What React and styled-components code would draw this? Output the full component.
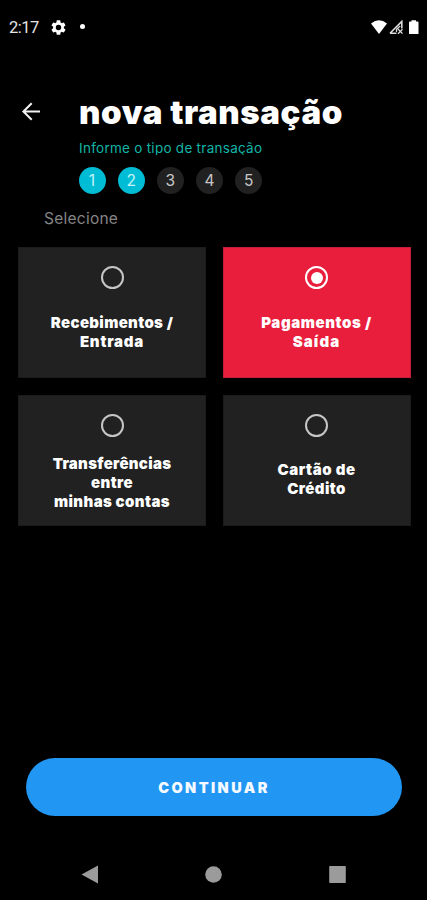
import React, { useState } from 'react'
import styled, { createGlobalStyle } from 'styled-components'

const GlobalStyle = createGlobalStyle`
  * {
    box-sizing: border-box;
  }
  body {
    margin: 0;
    background: #000;
  }
`;

const Screen = styled.div`
  display: flex;
  flex-direction: column;
  width: 427px;
  height: 900px;
  overflow: hidden;
  background: #000;
  color: #fff;
  font-family: Inter, 'Open Sans', sans-serif;
`;

const StatusBar = styled.div`
  display: flex;
  justify-content: space-between;
  height: 54px;
  padding: 18px 7px 0 9px;
  .left, .right {
    display: flex;
    height: 19px;
    align-items: center;
  }
  .right {
    align-items: flex-start;
    padding-top: 2px;
  }
`;

const Clock = styled.span`
  width: 42px;
  font-family: Roboto, sans-serif;
  font-size: 16.5px;
  line-height: 19px;
  color: #e4e4e4;
  letter-spacing: -0.5px;
`;

const Dot = styled.i`
  width: 5px;
  height: 5px;
  margin-left: 14px;
  margin-top: -2px;
  border-radius: 50%;
  background: #fff;
`;

const Header = styled.header`
  display: flex;
  height: 101px;
  padding: 37px 0 0 22px;
`;

const BackButton = styled.button`
  width: 57px;
  height: 30px;
  padding: 11px 0 0;
  border: 0;
  background: none;
  text-align: left;
  svg {
    display: block;
  }
`;

const Title = styled.h1`
  margin: 0;
  font-size: 33px;
  line-height: 42px;
  font-weight: 900;
  white-space: nowrap;
  letter-spacing: ${props => props.$spacing}px;
`;

const Subtitle = styled.p`
  height: 15px;
  margin: 7px 0 0;
  overflow: hidden;
  font-size: 13.5px;
  line-height: 17px;
  color: #12b5a6;
  white-space: nowrap;
  letter-spacing: ${props => props.$spacing}px;
`;

const Steps = styled.div`
  display: flex;
  gap: 12.2px;
  height: 51px;
  padding: 12px 0 0 78.5px;
`;

const Step = styled.span`
  width: 27px;
  height: 27px;
  border-radius: 50%;
  font-size: 15.5px;
  line-height: 27px;
  text-align: center;
  color: ${props => props.$done ? '#c4f4fa' : '#c8c8c8'};
  background: ${props => props.$done ? '#00bcd4' : '#212121'};
`;

const Label = styled.p`
  height: 41px;
  margin: 0;
  padding: 3px 0 0 44px;
  font-size: 15.5px;
  line-height: 20px;
  color: #858585;
  letter-spacing: ${props => props.$spacing}px;
`;

const Options = styled.div`
  display: grid;
  grid-template-columns: 188px 188px;
  grid-auto-rows: 131px;
  gap: 16.5px;
  padding: 0 0 0 18px;
`;

const Card = styled.button`
  display: flex;
  flex-direction: column;
  align-items: center;
  padding: 18px 0 0;
  border: 1px solid ${props => props.$active ? '#c51f38' : '#1b1b1b'};
  background: ${props => props.$active ? '#e91e3c' : '#212121'};
  color: #fff;
  font-family: inherit;
`;

const Radio = styled.span`
  display: flex;
  flex: none;
  align-items: center;
  justify-content: center;
  width: 23px;
  height: 23px;
  border: 2px solid ${props => props.$active ? '#fff' : '#c6c6c6'};
  border-radius: 50%;
  &::after {
    content: '';
    width: 12px;
    height: 12px;
    border-radius: 50%;
    background: ${props => props.$active ? '#fff' : 'transparent'};
  }
`;

const CardText = styled.span`
  display: flex;
  flex-direction: column;
  align-items: center;
  justify-content: center;
  height: 57px;
  margin-top: ${props => props.$tall ? 17 : 14}px;
`;

const Line = styled.span`
  font-size: 15px;
  line-height: 19px;
  font-weight: 900;
  white-space: nowrap;
  letter-spacing: ${props => props.$spacing}px;
`;

const Continue = styled.button`
  width: 376px;
  height: 58px;
  margin: auto 0 0 26px;
  padding: 0;
  border: 0;
  border-radius: 29px;
  background: #2196f3;
  color: #f4faff;
  font-family: inherit;
  font-size: 14.5px;
  font-weight: 900;
  letter-spacing: ${props => props.$spacing}px;
`;

const NavBar = styled.nav`
  display: flex;
  flex: none;
  justify-content: space-between;
  height: 84px;
  padding: 49px 81.5px 0 81px;
`;

const options = [
  [['Recebimentos /', 0.35], ['Entrada', 0.8]],
  [['Pagamentos /', 0.6], ['Saída', 1.1]],
  [['Transferências', 0.3], ['entre', 0.4], ['minhas contas', 0.4]],
  [['Cartão de', 0.55], ['Crédito', 0.4]],
]

const App = () => {
  const [selected, setSelected] = useState(1)

  return (
    <Screen>
      <GlobalStyle />
      <StatusBar>
        <div className="left">
          <Clock>2:17</Clock>
          <svg width="15" height="15" viewBox="2 2 20 20" fill="#fff">
            <path d="M19.14 12.94c.04-.3.06-.61.06-.94 0-.32-.02-.64-.07-.94l2.03-1.58a.49.49 0 0 0 .12-.61l-1.92-3.32a.49.49 0 0 0-.59-.22l-2.39.96c-.5-.38-1.03-.7-1.62-.94l-.36-2.54a.48.48 0 0 0-.48-.41h-3.84c-.24 0-.43.17-.47.41l-.36 2.54c-.59.24-1.13.57-1.62.94l-2.39-.96a.48.48 0 0 0-.59.22L2.74 8.87a.48.48 0 0 0 .12.61l2.03 1.58c-.05.3-.09.63-.09.94s.02.64.07.94l-2.03 1.58a.49.49 0 0 0-.12.61l1.92 3.32c.12.22.37.29.59.22l2.39-.96c.5.38 1.03.7 1.62.94l.36 2.54c.05.24.24.41.48.41h3.84c.24 0 .44-.17.47-.41l.36-2.54c.59-.24 1.13-.56 1.62-.94l2.39.96c.22.08.47 0 .59-.22l1.92-3.32a.48.48 0 0 0-.12-.61zM12 15.6a3.6 3.6 0 1 1 0-7.2 3.6 3.6 0 0 1 0 7.2z" />
          </svg>
          <Dot />
        </div>
        <div className="right">
          <svg width="49" height="15" viewBox="0 0 49 15">
            <path d="M0 3.4Q8 -2.8 16 3.4L8 14Z" fill="#fff" />
            <path d="M19 13.3L30.8 1.4V8.4M19 13.3H25.5" fill="none" stroke="#ddd" strokeWidth="1.6" />
            <path d="M25.5 12V9.2L29.2 6M27 9L31.5 13.6M31.5 9.2L27 13.8" fill="none" stroke="#ddd" strokeWidth="1.3" />
            <path d="M40.5 0.3h4.5v1.3h1.6q0.9 0 0.9 0.9V14h-9.5V2.5q0-0.9 0.9-0.9h1.6z" fill="#fff" />
          </svg>
        </div>
      </StatusBar>

      <Header>
        <BackButton aria-label="Voltar">
          <svg width="19" height="19" viewBox="0 0 19 19" fill="none" stroke="#f2f2f2" strokeWidth="2">
            <path d="M18 9.5H2M9.7 1.2L1.4 9.5l8.3 8.3" />
          </svg>
        </BackButton>
        <div>
          <Title $spacing={0.6}>nova transação</Title>
          <Subtitle $spacing={0.27}>Informe o tipo de transação</Subtitle>
        </div>
      </Header>

      <Steps>
        {[1, 2, 3, 4, 5].map(n => <Step key={n} $done={n < 3}>{n}</Step>)}
      </Steps>
      <Label $spacing={0.25}>Selecione</Label>

      <Options>
        {options.map((lines, i) => (
          <Card key={i} $active={i === selected} onClick={() => setSelected(i)}>
            <Radio $active={i === selected} />
            <CardText $tall={lines.length > 2}>
              {lines.map(([text, spacing]) => (
                <Line key={text} $spacing={spacing}>{text}</Line>
              ))}
            </CardText>
          </Card>
        ))}
      </Options>

      <Continue $spacing={2.4}>CONTINUAR</Continue>

      <NavBar>
        <svg width="17" height="19" viewBox="0 0 17 19" fill="#9b9b9b">
          <path d="M0.5 9.5L17 0.5v18z" />
        </svg>
        <svg width="17" height="19" viewBox="0 0 17 19" fill="#9b9b9b">
          <circle cx="8.5" cy="9.5" r="8.3" />
        </svg>
        <svg width="17" height="19" viewBox="0 0 17 19" fill="#9b9b9b">
          <rect x="0.2" y="1" width="16.6" height="17" rx="0.8" />
        </svg>
      </NavBar>
    </Screen>
  )
}

export default App
